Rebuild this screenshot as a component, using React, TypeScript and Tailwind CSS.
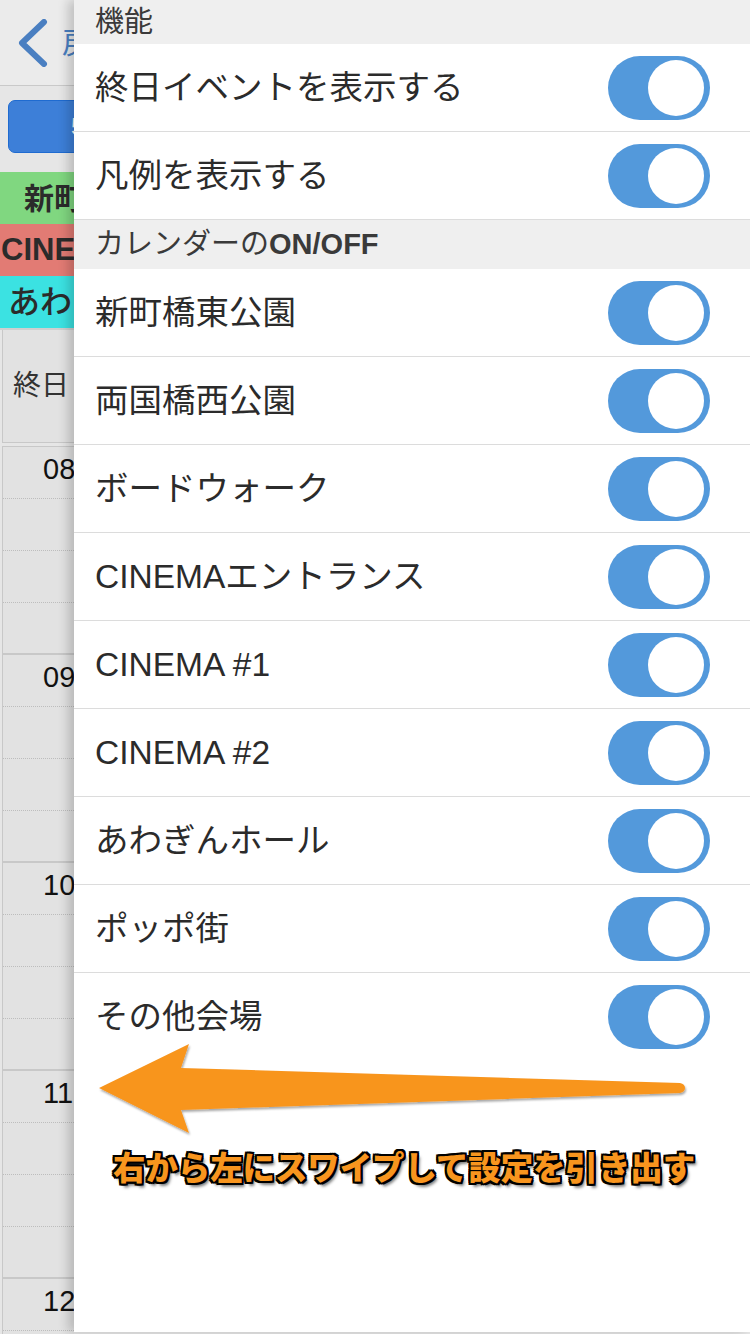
import React from 'react';

const jp = "font-['Liberation_Sans','Noto_Sans_CJK_JP',sans-serif]";

const calendars = [
  '新町橋東公園',
  '両国橋西公園',
  'ボードウォーク',
  'CINEMAエントランス',
  'CINEMA #1',
  'CINEMA #2',
  'あわぎんホール',
  'ポッポ街',
  'その他会場',
];

const hours = ['08', '09', '10', '11', '12'];

const Toggle: React.FC = () => (
  <div className="w-[102px] h-[64px] rounded-full bg-[#5399db] flex items-center justify-end pr-[6px]">
    <div className="w-[56px] h-[56px] rounded-full bg-white" />
  </div>
);

const Row: React.FC<{ label: string; last?: boolean }> = ({ label, last }) => (
  <div
    className={`h-[88px] flex items-center justify-between pl-[21px] pr-[40px] bg-white ${
      last ? '' : 'border-b border-[#dcdcdc]'
    }`}
  >
    <span className="text-[33.5px] text-[#2b2b2b] leading-none">{label}</span>
    <Toggle />
  </div>
);

// the calendar page underneath, only its left edge is visible
const BackgroundPage: React.FC = () => (
  <div className="w-[74px] shrink-0 overflow-hidden bg-[#e6e6e6] whitespace-nowrap">
    <div className="h-[86px] bg-[#ebebeb] border-b border-[#c9c9c9] flex items-center pl-[16px] gap-[14px] overflow-hidden">
      <svg width="32" height="48" viewBox="0 0 32 48" className="shrink-0">
        <path d="M28 3 L6 24 L28 45" fill="none" stroke="#4a7fc1" strokeWidth="6" strokeLinecap="round" strokeLinejoin="round" />
      </svg>
      <span className="text-[30px] text-[#4a7fc1]">戻</span>
    </div>
    <div className="h-[86px] pt-[14px] pl-[8px]">
      <div className="h-[53px] w-[120px] rounded-[7px] bg-[#3d7fd8] border border-[#1f6bd0] flex items-center pl-[62px] text-white text-[24px]">
        5
      </div>
    </div>
    <div className="h-[52px] bg-[#80d780] flex items-center pl-[24px] text-[30px] font-bold text-[#2b2b2b] overflow-hidden">新町</div>
    <div className="h-[52px] bg-[#e27b74] flex items-center pl-[1px] text-[31px] font-bold text-[#2b2b2b] overflow-hidden">CINE</div>
    <div className="h-[52px] bg-[#3be2e2] flex items-center pl-[8px] text-[32px] font-medium text-[#2b2b2b] overflow-hidden">あわ</div>
    <div className="pl-[2px] border-t-2 border-[#cfcfcf]">
      <div className="h-[112px] bg-[#e2e2e2] border-l border-[#c8c8c8] flex items-center pl-[10px] text-[28px] text-[#333]">
        終日
      </div>
      <div className="h-[5px] border-y border-[#c8c8c8] bg-[#e6e6e6]" />
      {hours.map((h) => (
        <div key={h} className="h-[208px] bg-[#e2e2e2] border-l border-b-2 border-[#c8c8c8] flex flex-col">
          <div className="h-[52px] border-b border-dotted border-[#bdbdbd] flex pl-[40px] pt-[8px] text-[29px] text-[#111] leading-none overflow-hidden">
            {h}
          </div>
          <div className="h-[52px] border-b border-dotted border-[#bdbdbd]" />
          <div className="h-[52px] border-b border-dotted border-[#bdbdbd]" />
          <div className="flex-1" />
        </div>
      ))}
    </div>
  </div>
);

const Drawer: React.FC = () => (
  <div className="relative z-10 flex-1 h-[1332px] bg-white shadow-[-6px_0_10px_rgba(0,0,0,0.18)] flex flex-col">
    <div className="h-[44px] bg-[#efefef] flex items-center pl-[21px] text-[29px] text-[#3a3a3a] leading-none">機能</div>
    <Row label="終日イベントを表示する" />
    <Row label="凡例を表示する" />
    <div className="h-[49px] bg-[#efefef] flex items-center pl-[21px] text-[29px] text-[#3a3a3a] leading-none">
      カレンダーの<span className="font-bold">ON/OFF</span>
    </div>
    {calendars.map((c, i) => (
      <Row key={c} label={c} last={i === calendars.length - 1} />
    ))}
  </div>
);

const Annotation: React.FC = () => (
  <>
    <svg className="absolute z-20 left-0 top-[1030px]" width="750" height="120" viewBox="0 1030 750 120">
      <defs>
        <filter id="sh" x="-5%" y="-20%" width="110%" height="140%">
          <feDropShadow dx="1" dy="2" stdDeviation="1.2" floodColor="#000" floodOpacity="0.35" />
        </filter>
      </defs>
      <path
        d="M99 1088 L189 1044 L181 1068 L680 1083 Q685 1084 685 1088 Q685 1092 680 1093 L181 1110 L189 1133 Z"
        fill="#f8951e"
        filter="url(#sh)"
      />
    </svg>
    <div
      className={`absolute z-20 left-[113px] top-[1153px] text-[32.4px] font-black leading-none text-[#f8951e] whitespace-nowrap ${jp} [text-shadow:-2px_-2px_0_#000,2px_-2px_0_#000,-2px_2px_0_#000,2px_2px_0_#000,0_-2px_0_#000,0_2px_0_#000,-2px_0_0_#000,2px_0_0_#000,3px_4px_3px_rgba(0,0,0,0.5)]`}
    >
      右から左にスワイプして設定を引き出す
    </div>
  </>
);

export default function App() {
  return (
    <div className={`relative w-[750px] h-[1334px] overflow-hidden bg-[#e6e6e6] flex ${jp}`}>
      <BackgroundPage />
      <Drawer />
      <Annotation />
    </div>
  );
}
